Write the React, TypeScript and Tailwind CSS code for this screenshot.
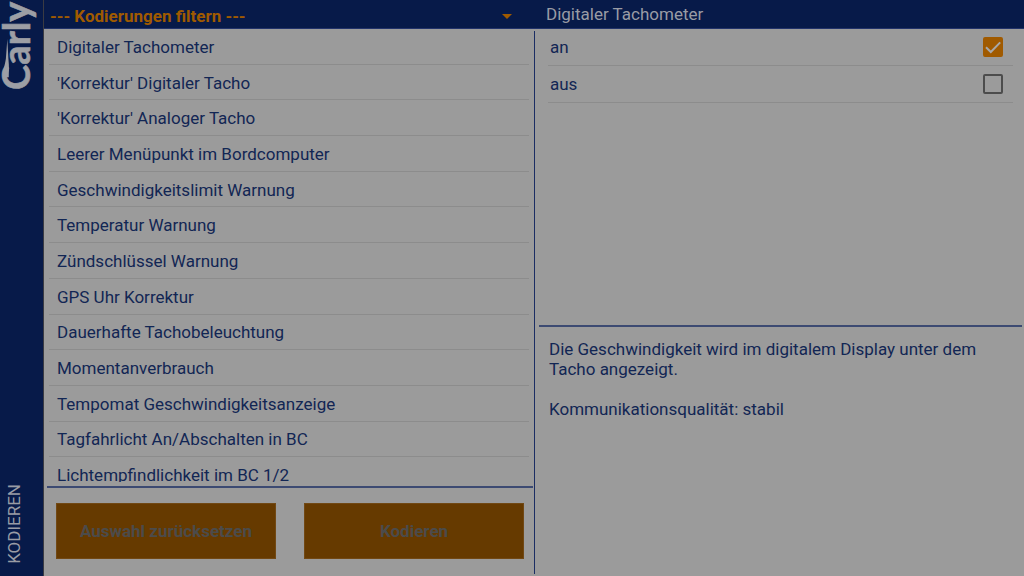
import { useState } from "react";

const codings = [
  "Digitaler Tachometer",
  "'Korrektur' Digitaler Tacho",
  "'Korrektur' Analoger Tacho",
  "Leerer Menüpunkt im Bordcomputer",
  "Geschwindigkeitslimit Warnung",
  "Temperatur Warnung",
  "Zündschlüssel Warnung",
  "GPS Uhr Korrektur",
  "Dauerhafte Tachobeleuchtung",
  "Momentanverbrauch",
  "Tempomat Geschwindigkeitsanzeige",
  "Tagfahrlicht An/Abschalten in BC",
  "Lichtempfindlichkeit im BC 1/2",
];

const options = ["an", "aus"];

function CarlyLogo() {
  return (
    <svg viewBox="0 0 44 94" className="w-full" role="img" aria-label="Carly">
      <g
        transform="translate(0 94) rotate(-90)"
        fill="#9d9fa5"
        stroke="#9d9fa5"
        strokeWidth="0.6"
      >
        <text
          x="2"
          y="31"
          fontSize="39"
          fontWeight="700"
          fontFamily="Lato, 'Liberation Sans', sans-serif"
        >
          Carly
        </text>
        {/* Swoosh running out of the C */}
        <path
          stroke="none"
          d="M15 3.6 C21 2.5 27 5 34 6 L54 7.5 L34 8.6 C30 9 26 9.2 22 9.2 C19 9 17 9 15 9 Z"
        />
      </g>
    </svg>
  );
}

function Sidebar() {
  return (
    <aside className="flex w-11 shrink-0 flex-col items-center justify-between border-r border-[#3a3b42] bg-[#071a49] pb-3 text-[#999ca5]">
      <CarlyLogo />
      <span className="rotate-180 pl-4 leading-5 [writing-mode:vertical-rl]">
        KODIEREN
      </span>
    </aside>
  );
}

interface OptionRowProps {
  label: string;
  checked: boolean;
  onSelect: () => void;
}

function OptionRow({ label, checked, onSelect }: OptionRowProps) {
  return (
    <li className="border-b border-[#8c8c8c]">
      <label className="flex h-9 items-center justify-between pr-2.5 pl-0.5">
        <span>{label}</span>
        <span className="relative flex">
          <input
            type="checkbox"
            checked={checked}
            onChange={onSelect}
            className="size-5 appearance-none rounded-xs border-2 border-[#4c4c4c] checked:border-[#a05a00] checked:bg-[#a05a00]"
          />
          {checked && (
            <svg
              viewBox="0 0 20 20"
              className="pointer-events-none absolute inset-0 size-5"
              fill="none"
              stroke="#a8a8a8"
              strokeWidth="2"
            >
              <path d="M3 10.2 L7.8 15 L17.2 5.4" />
            </svg>
          )}
        </span>
      </label>
    </li>
  );
}

export default function App() {
  const [selected, setSelected] = useState(0);
  const [option, setOption] = useState("an");

  return (
    <div className="flex h-screen overflow-hidden bg-[#9b9b9b] font-[Roboto,'Liberation_Sans',sans-serif] text-[17px] leading-5 text-[#122654]">
      <Sidebar />

      <div className="flex min-w-0 flex-1 flex-col">
        <header className="flex h-[29px] shrink-0 items-center border-b border-[#22336a] bg-[#071a49]">
          <div className="relative flex w-1/2 items-center">
            <select
              aria-label="Kodierungen filtern"
              className="h-7 w-full appearance-none bg-transparent pt-1 pl-1.5 font-bold text-[#a05a00] outline-none"
            >
              <option>--- Kodierungen filtern ---</option>
            </select>
            <svg
              viewBox="0 0 10 5"
              className="pointer-events-none absolute right-[22px] mt-1 w-2.5"
              fill="#a05a00"
            >
              <path d="M0 0 H10 L5 5 Z" />
            </svg>
          </div>
          <h1 className="flex-1 pl-3 text-[#999ca5]">{codings[selected]}</h1>
        </header>

        <div className="flex min-h-0 flex-1">
          {/* Coding list */}
          <section className="flex w-1/2 flex-col">
            <div className="min-h-0 flex-1 overflow-hidden pr-[5px] pl-[5px]">
              <ul className="grid h-[464px] auto-rows-fr">
                {codings.map((name, i) => (
                  <li key={name} className="border-b border-[#8c8c8c]">
                    <button
                      onClick={() => setSelected(i)}
                      className="flex size-full items-center pt-px pl-2 text-left"
                    >
                      {name}
                    </button>
                  </li>
                ))}
              </ul>
            </div>
            <div className="mt-1 mr-px ml-[3px] flex gap-7 border-t-2 border-[#3c4a72] pt-[15px] pr-[9px] pb-[17px] pl-[9px]">
              <button
                disabled
                className="h-14 flex-1 border border-[#714814] bg-[#663a00] font-bold text-[#4b4b4b]"
              >
                Auswahl zurücksetzen
              </button>
              <button
                disabled
                className="h-14 flex-1 border border-[#714814] bg-[#663a00] font-bold text-[#4b4b4b]"
              >
                Kodieren
              </button>
            </div>
          </section>

          <div className="my-0.5 w-px bg-[#1b2d63]" />

          {/* Options and description of the selected coding */}
          <section className="flex min-w-0 flex-1 flex-col pr-0.5 pl-1">
            <ul className="flex-1 px-[9px]">
              {options.map((o) => (
                <OptionRow
                  key={o}
                  label={o}
                  checked={option === o}
                  onSelect={() => setOption(o)}
                />
              ))}
            </ul>
            <div className="h-[251px] border-t-2 border-[#3c4a72] px-2.5 pt-3">
              <p>
                Die Geschwindigkeit wird im digitalem Display unter dem Tacho
                angezeigt.
              </p>
              <p className="mt-5">Kommunikationsqualität: stabil</p>
            </div>
          </section>
        </div>
      </div>
    </div>
  );
}
